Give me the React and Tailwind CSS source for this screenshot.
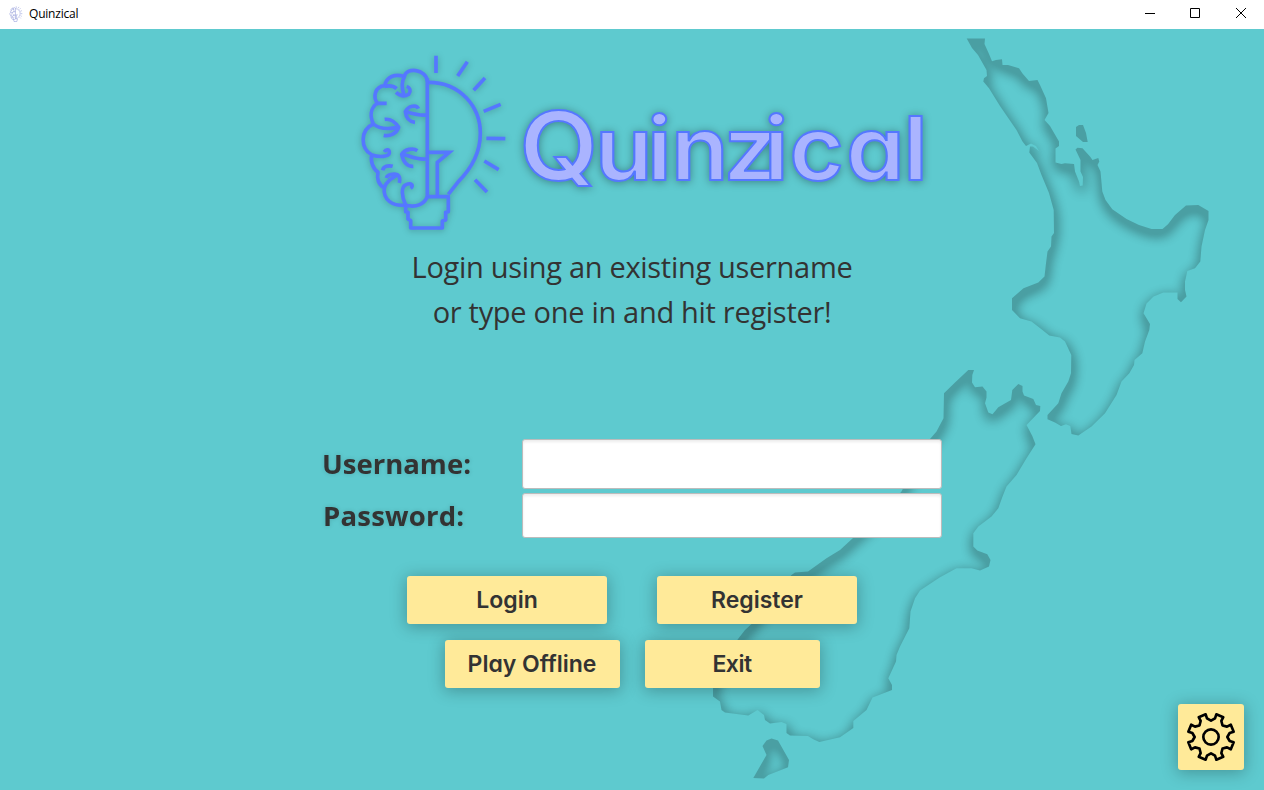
import React from "react";

const NORTH =
  "M966.7 38.5H985L984.5 44L989 54L992 61.3L996 60L1002 59.3L1002.5 65H1008L1019 68.3L1022.5 73.5L1029 81L1037.5 80L1040 85L1046 98.3L1048.5 113L1044.5 120L1050 126L1059 141.5V146L1055.5 148.5V162.5L1061.5 164L1065 163.3L1074 164L1075 171.5L1079 181.5L1080 186L1082.7 185.5L1083 177L1080.5 171.5V160L1075.5 149.5L1077.5 147.7L1082.5 148.3L1090 156.5L1092.5 160L1098.3 158L1099.3 161.5L1097.5 165L1100.5 171.5L1102.3 191.5L1105.5 200L1112.3 209.3L1126.5 219L1139 225L1151.5 229H1162.5L1168 224.3L1175 215L1186 205.5L1198.3 205L1208.5 211V220L1205 230L1201.5 246.5L1200.3 261.5L1195 268.3L1187.3 271L1185 281.5V290L1186.5 296.5L1181 302.3L1177.5 299V292.5H1163.3L1153.5 296.5L1146.5 303.5L1143.5 313.3L1150 324L1149.3 330L1145 341.5L1142.3 353.3L1134.5 360L1134 365L1129.3 373.3L1121.5 381.5L1116.5 395L1105 413.3L1091.5 426.5L1078.3 435.5L1071.5 434L1070.3 426L1066 424.3L1061 426L1055 422.5L1047.5 419.3V415L1058.3 403.3L1061.5 393.3L1068.3 381.5L1071 373.3L1071.3 355L1065 341.5L1060 337.5L1049.3 335.5L1041.5 329.3L1031.5 321.5L1020 318.3L1012 310V298.3L1023.5 288.3L1038.3 282.5L1044.5 276.5L1046 263.3L1047.5 251.5L1051 246.5L1051.5 236.5L1054 233L1053.7 210L1049 193L1041.5 175L1037 163L1029.3 152.5L1030 146.5H1033L1039 151L1036 146L1031 143.5L1026 146L1022.5 141.5L1016.5 130L1000 106L989 88.3L983.3 81.5L984 78.3L987 76L986.5 70L978 55L972 48Z";

const SOUTH =
  "M930 439L936.5 431.5L943.5 418.3L944 393.3L955 382.5L968.3 370H974L972.3 375L972 382.5L975 387.3L982.5 386.5L986.5 391.5V397.5L985 403.3L988.3 412.5L992.5 414.3L998.3 407.3L1011 400L1012.3 390L1018.3 384L1022.5 386V391.5L1024 395.5L1033.3 399L1036 405L1040.3 406L1040 411L1026.5 425L1032.3 436L1035.5 444.3L1026.5 458.3L1016.5 475L1006.5 486.5L1002.5 496.5L998.3 508.3L991.5 516.5L978.3 526.5L973.3 533.3V546.5L977.3 550.5L987.3 554.3L990.5 560L989 566.5L980 570.5L971.5 568.3H956.5L940 577.3L920 590.5L915 598.3L910.5 611.5L909.3 628.3L900 646.5L896.5 655L896 661.5L888.3 678.3L892 685V690L872.5 697.5L866.5 710L853.3 721V728L840 737.3L819.3 742L813.3 739.3L808 736L790 735.5L786.5 733V724L781.5 722L770 723.5L765 720L764 715L757.5 710L748.3 715.5L725 712.5L721.5 710L720 701.5L713 696.5V688L722 665L738 639L745 630L751.5 624L770 600L791.5 575L795 572.5L808 571.5L826.5 558.3L840 550L853 538L880 515L901.5 491.5L915 465Z";

const ISLETS =
  "M1079 125H1083L1086 133L1087.7 142H1083L1076 136V127ZM771.5 738.5L778 740.5L789 760L788 767.3L768.3 775L764 778.5L753.3 778L766.5 755L762.5 746L766.5 740.5Z";

function MapBackdrop() {
  return (
    <svg viewBox="0 29 1264 761" className="col-start-1 row-start-1 h-[761px] w-[1264px]" aria-hidden="true">
      <defs>
        <filter id="inset" filterUnits="userSpaceOnUse" x="680" y="29" width="584" height="761" colorInterpolationFilters="sRGB">
          <feComponentTransfer in="SourceAlpha" result="inv">
            <feFuncA type="linear" slope="-1" intercept="1" />
          </feComponentTransfer>
          <feGaussianBlur in="inv" stdDeviation="6.5" />
          <feOffset dx="1" dy="4.5" />
          <feComponentTransfer result="capped">
            <feFuncA type="table" tableValues="0 0.07 0.125 0.17 0.2 0.215 0.215 0.215 0.215 0.215 0.215" />
          </feComponentTransfer>
          <feComposite in="capped" in2="SourceAlpha" operator="in" />
        </filter>
      </defs>
      <path d={NORTH + SOUTH + ISLETS} filter="url(#inset)" />
    </svg>
  );
}

function BulbArt() {
  return (
    <g fill="none" stroke="currentColor" strokeLinejoin="round">
      <path d="M232 100V458M228 455H295V500L287 502V525L277 528V549H182V527L174 522V502L167 500V480" />
      <path d="M236 112C330 112 391 185 391 265C391 330 360 375 325 410L295 448" />
      <path d="M236 322H298L262 352V450" strokeLinejoin="miter" />
      <path d="M232 108C228 72 168 65 163 95C135 85 110 95 104 122C75 125 68 155 82 175C60 190 60 215 70 237C30 255 30 310 66 330C60 345 68 370 84 382C80 400 85 420 103 428C98 465 130 485 165 480C200 490 225 475 232 455" />
      <path d="M104 124C115 122 130 122 140 131M82 175H110M163 95C155 110 155 130 162 150M138 142Q158 160 176 148C184 138 180 128 170 124" />
      <path d="M228 210C205 212 185 205 168 200M205 191C200 178 175 182 166 200C168 218 175 230 195 232" />
      <path d="M70 237C90 255 120 252 145 247M104 223C120 221 135 230 146 247C140 265 120 275 101 271" />
      <path d="M66 330C90 338 115 335 118 325C120 312 108 312 103 321" />
      <path d="M228 342C195 345 175 330 155 327M202 317C190 308 165 312 155 328C160 350 170 365 190 364" />
      <path d="M98 376C100 364 115 360 128 364M103 428C108 410 125 400 142 390M109 399C112 390 130 384 142 389C152 395 150 405 148 414" />
      <path d="M167 480C155 455 152 425 168 419C185 412 192 422 182 430" />
      <path d="M258 32V84M352 50L323 93M405 99L371 136M452 178L401 199M409 280L466 281M403 348L446 374M375 404L411 441" />
    </g>
  );
}

function Gear() {
  const pts = [[-16, -68], [-12, -56], [0, -49], [12, -56], [16, -68]];
  const all = [];
  for (let i = 0; i < 8; i++) {
    const c = Math.cos((i * Math.PI) / 4);
    const s = Math.sin((i * Math.PI) / 4);
    pts.forEach(([x, y]) => all.push((x * c - y * s).toFixed(1) + "," + (x * s + y * c).toFixed(1)));
  }
  return (
    <svg viewBox="-75 -75 150 150" className="h-[50px] w-[50px]" fill="none" stroke="#000" strokeWidth="8">
      <polygon points={all.join(" ")} strokeLinejoin="round" />
      <circle r="23" />
    </svg>
  );
}

const buttonBase =
  "flex h-12 items-center justify-center rounded-[3px] bg-[#ffea99] pt-px font-['Inter',sans-serif] text-[23px] font-semibold text-[#333333] shadow-[0_2px_16px_1px_rgba(0,0,0,0.26)] [font-feature-settings:'cv11','ss03']";

const labelBase =
  "flex items-center font-['Open_Sans','Noto_Sans',sans-serif] text-[27.5px] font-bold drop-shadow-[0_0_2px_rgba(0,0,0,0.15)]";

const fieldBase =
  "rounded-[3px] border border-[#bcbcbc] bg-white shadow-[inset_0_2px_3px_rgba(0,0,0,0.08)] outline-none";

export default function App() {
  return (
    <div className="flex h-[790px] w-[1264px] flex-col overflow-hidden bg-[#5ecacf]">
      <header className="flex h-[29px] shrink-0 items-center justify-between bg-white pb-[2px] text-black">
        <div className="flex items-center gap-[5px] pl-2">
          <svg viewBox="20 20 460 545" className="h-4 w-4 text-[#8e98d8]" strokeWidth="18">
            <BulbArt />
          </svg>
          <span className="font-['Open_Sans','Noto_Sans',sans-serif] text-[12px] leading-4 tracking-[-0.2px]">Quinzical</span>
        </div>
        <div className="flex items-center gap-[34px] pr-[17px]">
          <svg viewBox="0 0 12 12" className="h-3 w-3" stroke="#000"><path d="M2 5.5H12" /></svg>
          <svg viewBox="0 0 12 12" className="h-3 w-3" stroke="#000" fill="none"><path d="M1.5 0.5H10.5V9.5H1.5Z" /></svg>
          <svg viewBox="0 0 12 12" className="h-3 w-3" stroke="#000"><path d="M1 0L11 10M11 0L1 10" /></svg>
        </div>
      </header>

      <main className="grid h-[761px] grid-cols-1 grid-rows-1 text-[#333333]">
        <MapBackdrop />

        <div className="z-10 col-start-1 row-start-1 flex flex-col items-center pt-4">
          <div className="flex h-[195px] w-[600px] items-start pl-[18px]">
            <svg viewBox="0 0 510 585" className="h-[195px] w-[170px] shrink-0 text-[#5577ff] drop-shadow-[0_1px_3px_rgba(0,0,0,0.25)]" strokeWidth="11">
              <BulbArt />
            </svg>
            <svg viewBox="0 0 430 105" className="-ml-[10px] mt-[50px] h-[105px] w-[430px] shrink-0 overflow-visible drop-shadow-[0_1px_4px_rgba(0,0,0,0.35)]">
              <text
                y="84.5"
                transform="scale(1.07 1)"
                x="9 79.5 128 150.5 199.5 237.5 261 314 367.5"
                className="fill-[#aab4ff] stroke-[#5577ff] font-['Inter',sans-serif] text-[88px] font-semibold [font-feature-settings:'cv11']"
                strokeWidth="2"
              >
                <tspan className="text-[95px]">Q</tspan>uinzical
              </text>
            </svg>
          </div>

          <p className="mt-1 text-center font-['Open_Sans','Noto_Sans',sans-serif] text-[29px] leading-[45px] tracking-[-0.3px]">
            Login using an existing username
            <br />
            or type one in and hit register!
          </p>

          <form className="mt-[105px] grid w-[620px] grid-cols-[200px_420px] gap-y-1" onSubmit={(e) => e.preventDefault()}>
            <label htmlFor="user" className={labelBase + " h-[50px]"}>Username:</label>
            <input id="user" className={fieldBase + " h-[50px]"} />
            <label htmlFor="pass" className={labelBase + " h-[45px] pl-px tracking-[0.2px]"}>Password:</label>
            <input id="pass" type="password" className={fieldBase + " h-[45px]"} />
          </form>

          <div className="mt-[38px] flex gap-[50px]">
            <button className={buttonBase + " w-[200px]"}>Login</button>
            <button className={buttonBase + " w-[200px]"}>Register</button>
          </div>
          <div className="mt-4 flex gap-[25px]">
            <button className={buttonBase + " w-[175px]"}>Play Offline</button>
            <button className={buttonBase + " w-[175px] tracking-[-0.5px]"}>Exit</button>
          </div>
        </div>

        <button
          aria-label="Settings"
          className="z-20 col-start-1 row-start-1 mb-5 mr-5 flex h-[66px] w-[66px] items-center justify-center self-end justify-self-end rounded-[3px] bg-[#ffea99] shadow-[0_2px_16px_1px_rgba(0,0,0,0.26)]"
        >
          <Gear />
        </button>
      </main>
    </div>
  );
}
